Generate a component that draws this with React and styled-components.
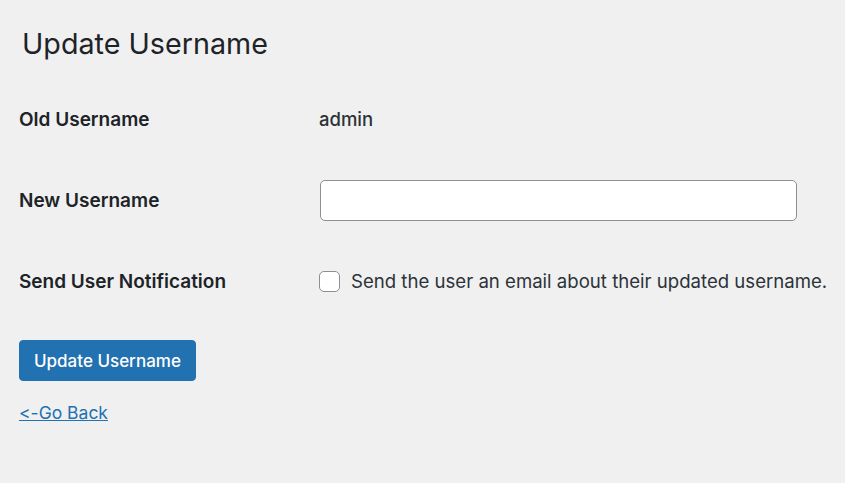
import React, { useState } from 'react';
import styled, { createGlobalStyle } from 'styled-components';

const GlobalStyle = createGlobalStyle`
    html, body {
        margin: 0;
        padding: 0;
        background: #f0f0f1;
    }
    body {
        font-family: Inter, "Noto Sans", "Liberation Sans", sans-serif;
        font-feature-settings: "calt" 0;
        color: #1d2327;
    }
`;

const Page = styled.div`
    padding: 25px 0 40px 19px;
    min-height: 483px;
    box-sizing: border-box;
`;

const Title = styled.h1`
    margin: 0 0 0 3px;
    font-size: 28.7px;
    font-weight: 400;
    line-height: 38px;
    color: #1d2327;
`;

const FormTable = styled.div`
    display: grid;
    grid-template-columns: 300px 1fr;
    margin-top: 38px;
`;

const Label = styled.div`
    display: flex;
    align-items: center;
    height: ${p => p.$h}px;
    font-size: 19px;
    font-weight: 600;
    color: #1d2327;
`;

const Cell = styled.div`
    display: flex;
    align-items: center;
    height: ${p => p.$h}px;
    font-size: 18.5px;
    color: #2c3338;
`;

const Value = styled.span`
    font-weight: 500;
`;

const TextInput = styled.input`
    box-sizing: border-box;
    width: 477px;
    height: 41px;
    margin-left: 1px;
    border: 1px solid #8c8f94;
    border-radius: 5px;
    background: #fff;
    font: inherit;
    padding: 0 10px;
    outline: none;
`;

const CheckLabel = styled.label`
    display: flex;
    align-items: center;
    gap: 11px;
    font-size: 18.6px;
    white-space: nowrap;
    color: #2c3338;
    cursor: pointer;
`;

const Box = styled.span`
    box-sizing: border-box;
    flex: none;
    width: 21px;
    height: 21px;
    border: 1px solid #8c8f94;
    border-radius: 5px;
    background: #fff;
    display: inline-block;
`;

const Button = styled.button`
    margin-top: 41px;
    height: 41px;
    padding: 0 14px;
    background: #2271b1;
    border: 1px solid #2271b1;
    border-radius: 4px;
    color: #fff;
    font-family: inherit;
    font-feature-settings: "calt" 0;
    font-size: 17px;
    font-weight: 500;
    cursor: pointer;
`;

const BackLink = styled.a`
    display: block;
    margin-top: 21px;
    width: fit-content;
    font-size: 17.5px;
    color: #2271b1;
    text-decoration: underline;
`;

export default function App() {
    const [name, setName] = useState('');
    return (
        <Page>
            <GlobalStyle />
            <Title>Update Username</Title>
            <FormTable>
                <Label $h={36}>Old Username</Label>
                <Cell $h={36}><Value>admin</Value></Cell>

                <Label $h={126}>New Username</Label>
                <Cell $h={126}>
                    <TextInput value={name} onChange={e => setName(e.target.value)} />
                </Cell>

                <Label $h={36}>Send User Notification</Label>
                <Cell $h={36}>
                    <CheckLabel>
                        <Box />
                        Send the user an email about their updated username.
                    </CheckLabel>
                </Cell>
            </FormTable>
            <Button>Update Username</Button>
            <BackLink href="#">&lt;-Go Back</BackLink>
        </Page>
    );
}
